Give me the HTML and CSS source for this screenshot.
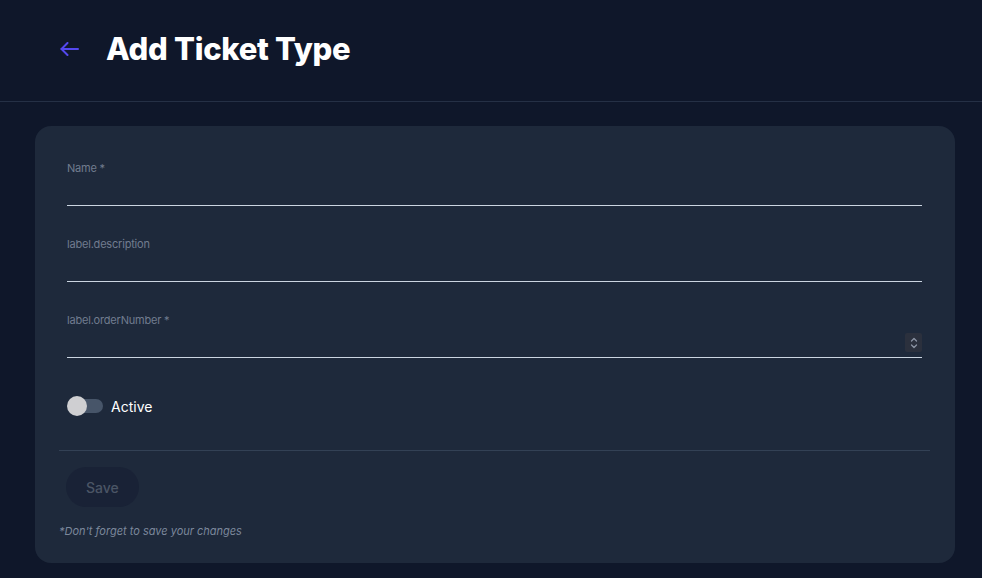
FILE: index.html
```html
<!DOCTYPE html>
<html>
<head>
<meta charset="utf-8">
<link rel="stylesheet" href="styles.css">
</head>
<body>
<header class="top">
  <button class="back" aria-label="Back">
    <svg width="19" height="14" viewBox="0 0 19 14" fill="none" stroke="currentColor" stroke-width="2" stroke-linecap="round" stroke-linejoin="round"><path d="M18 7H1.5"/><path d="M7.5 1L1.5 7l6 6"/></svg>
  </button>
  <h1 class="title">Add Ticket Type</h1>
</header>
<main class="main">
  <section class="card">
    <div class="field">
      <label class="label">Name *</label>
      <div class="input"></div>
    </div>
    <div class="field">
      <label class="label">label.description</label>
      <div class="input"></div>
    </div>
    <div class="field">
      <label class="label">label.orderNumber *</label>
      <div class="input number">
        <span class="spin">
          <svg width="8" height="12" viewBox="0 0 8 12" fill="none" stroke="#8a93a3" stroke-width="1.3" stroke-linecap="round" stroke-linejoin="round"><path d="M1.5 4L4 1.5 6.5 4"/><path d="M1.5 8L4 10.5 6.5 8"/></svg>
        </span>
      </div>
    </div>
    <div class="toggle-row">
      <span class="switch"><span class="track"></span><span class="knob"></span></span>
      <span class="toggle-label">Active</span>
    </div>
    <hr class="divider">
    <button class="save">Save</button>
    <p class="note">*Don't forget to save your changes</p>
  </section>
</main>
</body>
</html>
```
FILE: styles.css
```css
* { box-sizing: border-box; }
html, body { margin: 0; padding: 0; }
body {
  background: #0f172a;
  font-family: Inter, "Noto Sans", sans-serif;
  color: #fff;
  width: 982px;
  height: 578px;
  overflow: hidden;
}
.top {
  height: 102px;
  border-bottom: 1px solid #253045;
  display: flex;
  align-items: center;
  padding: 0 0 4px 60px;
}
.back {
  background: none;
  border: 0;
  padding: 0;
  color: #5448ee;
  display: flex;
  width: 19px;
  height: 14px;
  margin-right: 27px;
  cursor: pointer;
}
.title {
  margin: 0;
  font-size: 31px;
  font-weight: 800;
  letter-spacing: -0.3px;
  line-height: 36px;
}
.main {
  padding: 24px 27px 0 35px;
}
.card {
  background: #1e293b;
  border-radius: 16px;
  padding: 35px 33px 26px 32px;
  height: 437px;
}
.field {
  display: flex;
  flex-direction: column;
  margin-bottom: 31px;
}
.label {
  font-size: 11px;
  line-height: 15px;
  color: #717c8f;
  letter-spacing: -0.2px;
}
.input {
  height: 30px;
  border-bottom: 1px solid #cbd5e1;
  position: relative;
}
.spin {
  position: absolute;
  right: 0;
  bottom: 5px;
  width: 17px;
  height: 19px;
  background: #2b303d;
  border-radius: 2px;
  display: flex;
  align-items: center;
  justify-content: center;
}
.toggle-row {
  display: flex;
  align-items: center;
  margin-top: 37px;
  height: 22px;
}
.switch {
  position: relative;
  width: 37px;
  height: 20px;
  margin-right: 7px;
}
.track {
  position: absolute;
  left: 2px;
  top: 3px;
  width: 34px;
  height: 14px;
  border-radius: 7px;
  background: #475569;
}
.knob {
  position: absolute;
  left: 0;
  top: 0;
  width: 20px;
  height: 20px;
  border-radius: 50%;
  background: #cfcfd2;
}
.toggle-label {
  font-size: 14px;
  color: #fff;
}
.divider {
  border: 0;
  border-top: 1px solid #334155;
  margin: 33px -8px 16px -8px;
}
.save {
  display: block;
  height: 40px;
  padding: 0 20px;
  margin-left: -1px;
  border: 0;
  border-radius: 20px;
  background: #192236;
  color: #4b5565;
  font-family: Inter, sans-serif;
  font-size: 14px;
  font-weight: 500;
}
.note {
  margin: 17px 0 0 -8px;
  font-size: 11px;
  font-style: italic;
  color: #7c889b;
  line-height: 14px;
}
```
